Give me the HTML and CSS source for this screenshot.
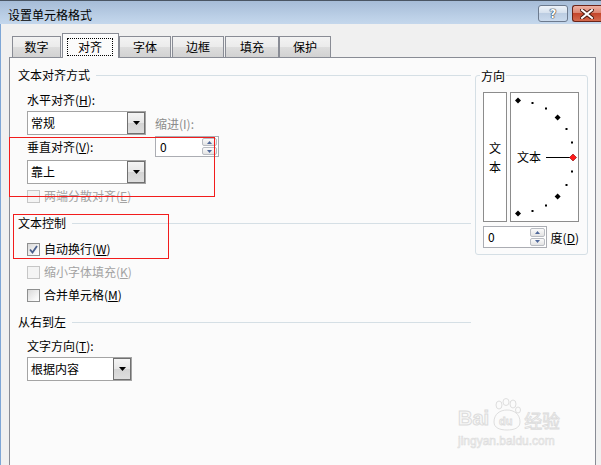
FILE: index.html
```html
<!DOCTYPE html>
<html>
<head>
<meta charset="utf-8">
<link rel="stylesheet" href="styles.css">
</head>
<body>
<div class="window">
  <div class="titlebar">
    <span class="title">设置单元格格式</span>
    <div class="tb-buttons">
      <div class="btn-help">?</div>
      <div class="btn-close">
        <svg width="14" height="10" viewBox="0 0 14 10"><path d="M2 1 L12 9 M12 1 L2 9" stroke="#4a1a12" stroke-width="4" stroke-linecap="square"/><path d="M2 1 L12 9 M12 1 L2 9" stroke="#fff" stroke-width="2" stroke-linecap="square"/></svg>
      </div>
    </div>
  </div>
  <div class="body">
    <div class="tabs">
      <div class="tab w49">数字</div>
      <div class="tab active"><span class="focus">对齐</span></div>
      <div class="tab w52">字体</div>
      <div class="tab w52 ml1">边框</div>
      <div class="tab w54 ml1">填充</div>
      <div class="tab w52">保护</div>
    </div>
    <div class="panel">
      <div class="left">
        <div class="heading">文本对齐方式</div>
        <div class="sub">
          <div class="align-row">
            <div class="col-a">
              <div class="label mt5">水平对齐(<u>H</u>):</div>
              <div class="select mt1"><span class="select-text">常规</span><span class="select-btn"><svg width="7" height="4" viewBox="0 0 7 4"><path d="M0 0 H7 L3.5 4 Z" fill="#000"/></svg></span></div>
              <div class="label mt2">垂直对齐(<u>V</u>):</div>
              <div class="select mt3"><span class="select-text">靠上</span><span class="select-btn"><svg width="7" height="4" viewBox="0 0 7 4"><path d="M0 0 H7 L3.5 4 Z" fill="#000"/></svg></span></div>
            </div>
            <div class="col-b">
              <div class="label gray indent-label">缩进(I):</div>
              <div class="spin mt2"><span class="spin-val">0</span>
                <div class="spin-btns">
                  <div class="sb"><svg width="5" height="3" viewBox="0 0 5 3"><path d="M0 3 H5 L2.5 0 Z" fill="#50689a"/></svg></div>
                  <div class="sb"><svg width="5" height="3" viewBox="0 0 5 3"><path d="M0 0 H5 L2.5 3 Z" fill="#50689a"/></svg></div>
                </div>
              </div>
            </div>
          </div>
          <div class="cb mt2 disabled"><span class="box"></span>两端分散对齐(<u>E</u>)</div>
        </div>
        <div class="heading mt7">文本控制</div>
        <div class="sub">
          <div class="cb mt6"><span class="box"><svg width="11" height="11" viewBox="0 0 11 11"><path d="M2 5.5 L4.5 8.5 L9 2" fill="none" stroke="#4a5f8c" stroke-width="1.8"/></svg></span>自动换行(<u>W</u>)</div>
          <div class="cb mt3 disabled"><span class="box"></span>缩小字体填充(<u>K</u>)</div>
          <div class="cb mt3"><span class="box"></span>合并单元格(<u>M</u>)</div>
        </div>
        <div class="heading mt7">从右到左</div>
        <div class="sub">
          <div class="label mt4">文字方向(<u>T</u>):</div>
          <div class="select mt1 w105"><span class="select-text">根据内容</span><span class="select-btn"><svg width="7" height="4" viewBox="0 0 7 4"><path d="M0 0 H7 L3.5 4 Z" fill="#000"/></svg></span></div>
        </div>
      </div>
      <div class="orient">
        <div class="legend">方向</div>
        <div class="orient-boxes">
          <div class="vbox"><span>文</span><span>本</span></div>
          <div class="dial">
            <svg width="67" height="128" viewBox="0 0 67 128">
              <g fill="#000">
                <path d="M7 4.5 L10 7.5 L7 10.5 L4 7.5 Z"/>
                <rect x="20.5" y="9" width="2" height="2"/>
                <rect x="34" y="14.5" width="2" height="2"/>
                <path d="M46.6 21.4 L49.6 24.4 L46.6 27.4 L43.6 24.4 Z"/>
                <rect x="54.5" y="35" width="2" height="2"/>
                <rect x="60" y="48.5" width="2" height="2"/>
                <rect x="60" y="77.5" width="2" height="2"/>
                <rect x="54.5" y="91" width="2" height="2"/>
                <path d="M46.6 100.6 L49.6 103.6 L46.6 106.6 L43.6 103.6 Z"/>
                <rect x="34" y="111.5" width="2" height="2"/>
                <rect x="20.5" y="117" width="2" height="2"/>
                <path d="M7 117.5 L10 120.5 L7 123.5 L4 120.5 Z"/>
              </g>
              <text x="6" y="68.5" class="dial-text">文本</text>
              <line x1="35" y1="64.5" x2="60" y2="64.5" stroke="#000" stroke-width="1"/>
              <path d="M62 61 L65.5 64.5 L62 68 L58.5 64.5 Z" fill="#ff1a1a" stroke="#8a0000" stroke-width="0.6"/>
            </svg>
          </div>
        </div>
        <div class="orient-spin-row">
          <div class="spin h22"><span class="spin-val">0</span>
            <div class="spin-btns">
              <div class="sb"><svg width="5" height="3" viewBox="0 0 5 3"><path d="M0 3 H5 L2.5 0 Z" fill="#50689a"/></svg></div>
              <div class="sb"><svg width="5" height="3" viewBox="0 0 5 3"><path d="M0 0 H5 L2.5 3 Z" fill="#50689a"/></svg></div>
            </div>
          </div>
          <span class="deg">度(<u>D</u>)</span>
        </div>
      </div>
    </div>
  </div>

  <div class="redbox rb1"></div>
  <div class="redbox rb2"></div>

  <div class="watermark">
    <div class="wm-top">
      <span class="wm-bai">Bai</span>
      <span class="wm-du">
        <svg width="34" height="34" viewBox="0 0 34 34">
          <g fill="none" stroke="#dedede" stroke-width="1">
            <ellipse cx="9" cy="7" rx="3" ry="4"/>
            <ellipse cx="16" cy="4" rx="3" ry="3.5"/>
            <ellipse cx="23" cy="6" rx="3" ry="4"/>
            <ellipse cx="28" cy="12" rx="2.5" ry="3"/>
            <path d="M4 24 C4 16 10 12 17 12 C24 12 30 16 30 24 C30 30 24 32 17 32 C10 32 4 30 4 24 Z"/>
          </g>
          <text x="9" y="27" class="wm-du-text">du</text>
        </svg>
      </span>
      <span class="wm-jy">经验</span>
    </div>
    <div class="wm-url">jingyan.baidu.com</div>
  </div>
</div>
</body>
</html>
```
FILE: styles.css
```css
* { box-sizing: border-box; margin: 0; padding: 0; }
html, body { width: 601px; height: 465px; overflow: hidden; }
body {
  font-family: "Noto Sans CJK SC", "Noto Sans", sans-serif;
  font-size: 12px;
  color: #000;
  background: #f0f0f0;
}
u { text-decoration: underline; text-underline-offset: 1px; }

.window {
  position: relative;
  width: 601px;
  height: 465px;
  display: flex;
  flex-direction: column;
  background: #f0f0f0;
  overflow: hidden;
}

/* title bar */
.titlebar {
  height: 24px;
  flex: none;
  display: flex;
  align-items: flex-start;
  border-top: 1px solid #4a5563;
  background: linear-gradient(#a6bcd7, #bcd0e7 70%, #c4d7ec);
}
.title {
  margin-top: 4px;
  padding-left: 8px;
  line-height: 20px;
  height: 20px;
  color: #000;
}
.tb-buttons {
  margin-left: auto;
  margin-top: 4px;
  display: flex;
  gap: 4px;
}
.btn-help {
  width: 30px;
  height: 17px;
  border: 1px solid #6c7a8e;
  border-radius: 3px;
  background: linear-gradient(#eef3f9, #d6e1ee 45%, #bccde2 50%, #cadaed);
  display: flex;
  align-items: center;
  justify-content: center;
  font-family: "DejaVu Sans", sans-serif;
  font-weight: bold;
  font-size: 12px;
  line-height: 14px;
  color: #fff;
  text-shadow: 0 0 1px #1d2a3a, 0 0 1px #1d2a3a, 0 0 1px #1d2a3a;
}
.btn-close {
  width: 29px;
  height: 17px;
  border: 1px solid #6b2418;
  border-right: none;
  border-radius: 3px 0 0 3px;
  background: linear-gradient(#eeb1a3, #dc8672 45%, #c4452b 50%, #d46a4e);
  display: flex;
  align-items: center;
  justify-content: center;
}

/* body */
.body {
  flex: 1;
  display: flex;
  flex-direction: column;
  border-left: 1px solid #7ea6d6;
  min-height: 0;
}
.tabs {
  position: relative;
  z-index: 1;
  display: flex;
  align-items: flex-end;
  height: 24px;
  margin-top: 9px;
  padding-left: 11px;
  flex: none;
}
.tab {
  height: 21px;
  border: 1px solid #898c95;
  border-bottom: none;
  background: linear-gradient(#f3f3f3, #ebebeb 50%, #dddddd 51%, #d2d2d2);
  text-align: center;
  line-height: 19px;
}
.w49 { width: 49px; }
.w52 { width: 52px; }
.w54 { width: 54px; }
.ml1 { margin-left: 1px; }
.tab.active {
  width: 57px;
  height: 25px;
  margin-left: 1px;
  margin-bottom: -1px;
  background: #fbfbfb;
  padding: 3px 0 0 4px;
  text-align: left;
}
.focus {
  display: inline-block;
  width: 46px;
  height: 18px;
  border: 1px dotted #000;
  line-height: 16px;
  text-align: center;
}

.panel {
  flex: 1;
  margin-left: 8px;
  margin-bottom: -10px;
  width: 587px;
  border: 1px solid #898c95;
  background: #fbfbfb;
  display: flex;
  align-items: flex-start;
  padding: 7px 7px 0 8px;
}

/* left column */
.left { width: 453px; flex: none; }
.heading {
  display: flex;
  align-items: center;
  height: 20px;
  line-height: 20px;
  white-space: nowrap;
}
.heading::after {
  content: "";
  flex: 1;
  border-top: 1px solid #d5dfe5;
  margin-left: 6px;
}
.sub { padding-left: 9px; }
.align-row { display: flex; align-items: flex-start; }
.col-a { width: 119px; }
.col-b { margin-left: 9px; }
.label { height: 20px; line-height: 20px; white-space: nowrap; }
.indent-label { margin-top: 29px; }
.gray { color: #8c8c8c; }

.mt1 { margin-top: 1px; }
.mt2 { margin-top: 2px; }
.mt3 { margin-top: 3px; }
.mt4 { margin-top: 4px; }
.mt5 { margin-top: 5px; }
.mt6 { margin-top: 6px; }
.mt7 { margin-top: 7px; }

.select {
  display: flex;
  height: 24px;
  border: 1px solid #a4a4a4;
  background: #fff;
}
.select.w105 { width: 105px; }
.select-text {
  flex: 1;
  padding-left: 3px;
  line-height: 22px;
}
.select-btn {
  width: 18px;
  border: 1px solid #707070;
  background: linear-gradient(#f4f4f4, #e6e6e6 50%, #d4d4d4 51%, #dedede);
  display: flex;
  align-items: center;
  justify-content: center;
}

.spin {
  width: 64px;
  height: 21px;
  border: 1px solid #abadb3;
  background: #fff;
  display: flex;
  align-items: center;
  padding: 1px 1px 1px 4px;
}
.spin.h22 { height: 22px; }
.spin-val { line-height: 16px; }
.spin-btns {
  margin-left: auto;
  width: 15px;
  height: 100%;
  display: flex;
  flex-direction: column;
  gap: 1px;
}
.sb {
  flex: 1;
  border: 1px solid #b9bcc2;
  border-radius: 2px;
  background: linear-gradient(#fbfbfb, #e3e3e3);
  display: flex;
  align-items: center;
  justify-content: center;
}

.cb {
  display: flex;
  align-items: center;
  height: 20px;
  line-height: 20px;
  white-space: nowrap;
}
.box {
  width: 13px;
  height: 13px;
  border: 1px solid #8e8f8f;
  background: linear-gradient(135deg, #d9d9d9, #f6f6f6 70%, #ffffff);
  margin-right: 4px;
  display: flex;
  align-items: center;
  justify-content: center;
  flex: none;
}
.cb.disabled { color: #a3a3a3; }
.cb.disabled .box { border-color: #c6c6c6; background: #f4f4f4; }

/* orientation group */
.orient {
  width: 113px;
  flex: none;
  margin-left: 4px;
  margin-top: 10px;
  border: 1px solid #d5dfe5;
  border-radius: 3px;
  padding: 0 8px 6px 7px;
}
.legend {
  width: fit-content;
  margin: -8px 0 0 -3px;
  padding: 0 1px;
  height: 16px;
  line-height: 16px;
  background: #fbfbfb;
}
.orient-boxes {
  display: flex;
  gap: 3px;
  margin-top: 8px;
}
.vbox {
  width: 24px;
  height: 130px;
  border: 1px solid #8c8c8c;
  background: #fff;
  display: flex;
  flex-direction: column;
  align-items: center;
  justify-content: center;
  line-height: 19px;
}
.dial {
  width: 69px;
  height: 130px;
  border: 1px solid #8c8c8c;
  background: #fff;
}
.dial svg { display: block; }
.dial-text {
  font-family: "Noto Sans CJK SC", sans-serif;
  font-size: 12px;
  fill: #000;
}
.orient-spin-row {
  display: flex;
  align-items: center;
  margin-top: 4px;
}
.deg { margin-left: 4px; white-space: nowrap; }

/* annotation boxes drawn over the dialog */
.redbox {
  position: absolute;
  border: 1px solid #f21c1c;
}
.rb1 { left: 9px; top: 137px; width: 206px; height: 60px; }
.rb2 { left: 13px; top: 214px; width: 156px; height: 45px; }

/* watermark overlay */
.watermark {
  position: absolute;
  left: 458px;
  top: 396px;
  width: 112px;
}
.wm-top {
  display: flex;
  align-items: flex-end;
  height: 36px;
}
.wm-bai {
  font-family: "Liberation Sans", sans-serif;
  font-weight: bold;
  font-size: 20px;
  line-height: 20px;
  color: #f7f7f7;
  -webkit-text-stroke: 1px #dcdcdc;
  margin-bottom: 4px;
}
.wm-du { display: block; width: 34px; height: 34px; margin-left: 1px; }
.wm-du svg { display: block; }
.wm-du-text {
  font-family: "Liberation Sans", sans-serif;
  font-weight: bold;
  font-size: 11px;
  fill: #f7f7f7;
  stroke: #dcdcdc;
  stroke-width: 0.8;
}
.wm-jy {
  font-size: 18px;
  line-height: 20px;
  color: #f7f7f7;
  -webkit-text-stroke: 0.8px #dcdcdc;
  margin-bottom: 2px;
}
.wm-url {
  font-family: "Liberation Sans", sans-serif;
  font-size: 12px;
  line-height: 14px;
  color: #f7f7f7;
  -webkit-text-stroke: 0.6px #dcdcdc;
  margin-top: 2px;
}
```
